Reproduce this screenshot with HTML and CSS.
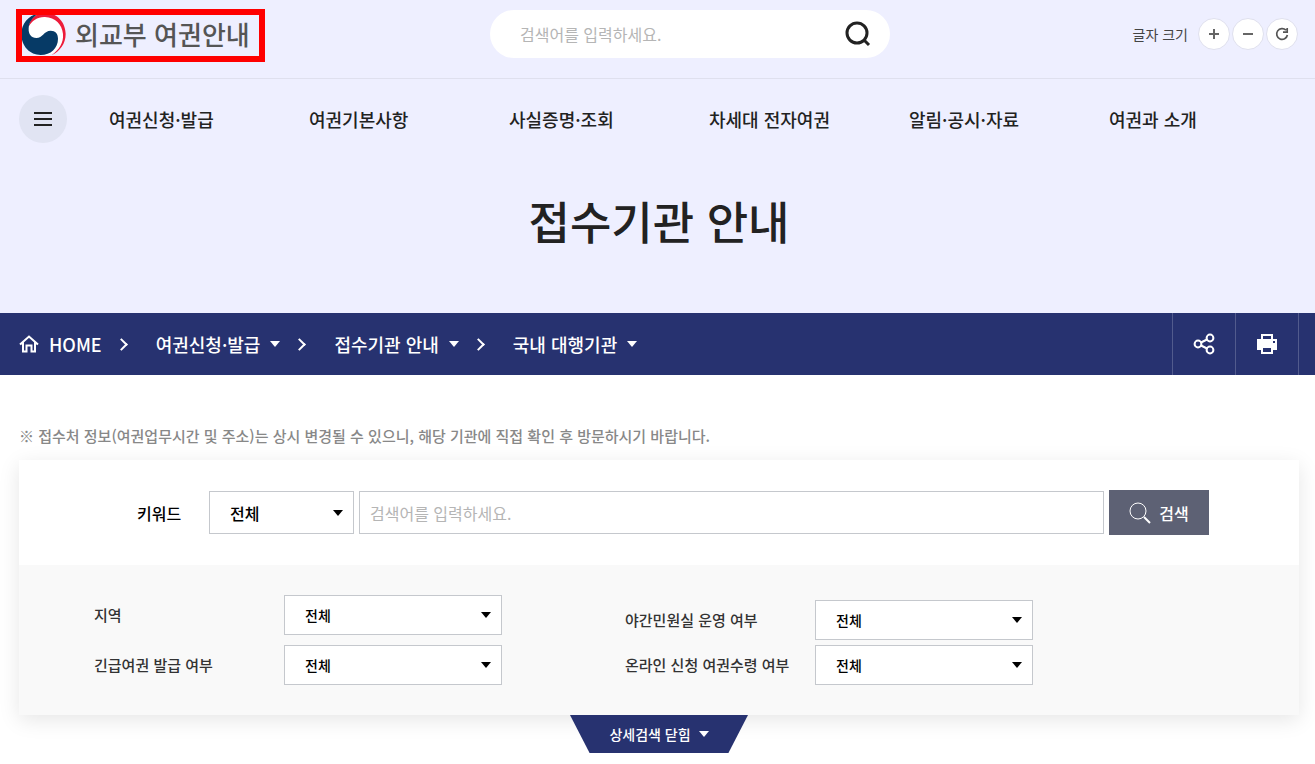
FILE: index.html
```
<!DOCTYPE html>
<html lang="ko">
<head>
  <meta charset="UTF-8">
  <title>접수기관 안내 | 외교부 여권안내</title>
  <meta name="viewport" content="width=device-width, initial-scale=1.0">
  <link rel="stylesheet" href="styles.css">
</head>
<body>
  <header class="header">
    <div class="header-top">
      <a href="#" class="logo">
        <svg class="logo-mark" viewBox="0 0 144 144" aria-hidden="true">
          <circle cx="70" cy="71" r="65" fill="#fff"/>
          <path fill="#ed1b3a" d="M26 50C28 28 48 8 76 8C112 8 137 38 137 72C137 101 120 124 94 136C118 119 131 98 129 72C126 43 106 22 75 21C53 20 36 32 26 50Z"/>
          <path fill="#063a66" d="M56 10C24 17 4 42 4 73C4 109 30 135 62 135C92 135 114 114 114 86C114 70 106 62 92 62C72 62 68 84 49 84C34 84 25 73 26 55C27 36 38 22 56 10Z"/>
        </svg>
        <span>외교부 여권안내</span>
      </a>

      <form class="top-search">
        <input type="text" placeholder="검색어를 입력하세요." aria-label="통합검색">
        <button type="button" aria-label="검색">
          <svg width="28" height="28" viewBox="0 0 28 28" fill="none" stroke="#222" stroke-width="3">
            <circle cx="13" cy="13" r="10"/>
            <path d="M20 20L25 25"/>
          </svg>
        </button>
      </form>

      <div class="font-size">
        <span>글자 크기</span>
        <button type="button" aria-label="크게">
          <svg width="12" height="12" viewBox="0 0 12 12" fill="none" stroke="#666" stroke-width="2"><path d="M1 6H11M6 1V11"/></svg>
        </button>
        <button type="button" aria-label="작게">
          <svg width="12" height="12" viewBox="0 0 12 12" fill="none" stroke="#666" stroke-width="2"><path d="M1 6H11"/></svg>
        </button>
        <button type="button" aria-label="초기화">
          <svg width="14" height="14" viewBox="0 0 14 14" fill="none" stroke="#555" stroke-width="1.700"><path d="M11 3.200A5.400 5.400 0 1 0 12.400 8M12.200 1V5.200H8"/></svg>
        </button>
      </div>
    </div>

    <nav class="gnb">
      <button type="button" class="menu-btn" aria-label="전체메뉴"><i></i><i></i><i></i></button>
      <ul>
        <li><a href="#">여권신청·발급</a></li>
        <li><a href="#">여권기본사항</a></li>
        <li><a href="#">사실증명·조회</a></li>
        <li><a href="#">차세대 전자여권</a></li>
        <li><a href="#">알림·공시·자료</a></li>
        <li><a href="#">여권과 소개</a></li>
      </ul>
    </nav>

    <h1>접수기관 안내</h1>
  </header>

  <div class="location">
    <ol>
      <li>
        <a href="#" class="home">
          <svg width="20" height="20" viewBox="0 0 20 20" fill="none" stroke="#fff" stroke-width="2"><path d="M1 10.500L10 2.500L19 10.500M4 8.500V17.500H7.500V11.500H12.500V17.500H16V8.500"/></svg>
          HOME
        </a>
      </li>
      <li><a href="#" class="drop">여권신청·발급</a></li>
      <li><a href="#" class="drop">접수기관 안내</a></li>
      <li><a href="#" class="drop">국내 대행기관</a></li>
    </ol>
    <div class="location-btns">
      <button type="button" aria-label="공유">
        <svg width="22" height="22" viewBox="0 0 22 22" fill="none" stroke="#fff" stroke-width="2">
          <circle cx="5" cy="11" r="3.400"/><circle cx="17" cy="5" r="3.400"/><circle cx="17" cy="17" r="3.400"/>
          <path d="M8 9.500L14 6.500M8 12.500L14 15.500"/>
        </svg>
      </button>
      <button type="button" aria-label="인쇄">
        <svg width="22" height="22" viewBox="0 0 22 22">
          <path fill="#fff" fill-rule="evenodd" d="M5 1H17V6H21V17H17V21H5V17H1V6H5ZM7 3V6H15V3ZM7 15V19H15V15ZM17 8V10H19V8Z"/>
        </svg>
      </button>
    </div>
  </div>

  <main class="content">
    <p class="notice">※ 접수처 정보(여권업무시간 및 주소)는 상시 변경될 수 있으니, 해당 기관에 직접 확인 후 방문하시기 바랍니다.</p>

    <form class="search-box">
      <div class="keyword">
        <label for="keyType">키워드</label>
        <span class="select key-type">
          <select id="keyType"><option>전체</option></select>
        </span>
        <input type="text" placeholder="검색어를 입력하세요." aria-label="검색어">
        <button type="button" class="search-btn">
          <svg width="22" height="22" viewBox="0 0 22 22" fill="none" stroke="#fff">
            <circle cx="9" cy="9" r="8"/>
            <path stroke-width="2" d="M15 15L21 21"/>
          </svg>
          검색
        </button>
      </div>

      <div class="detail">
        <div class="detail-col">
          <div class="field">
            <label for="area">지역</label>
            <span class="select"><select id="area"><option>전체</option></select></span>
          </div>
          <div class="field">
            <label for="urgent">긴급여권 발급 여부</label>
            <span class="select"><select id="urgent"><option>전체</option></select></span>
          </div>
        </div>
        <div class="detail-col narrow">
          <div class="field">
            <label for="night">야간민원실 운영 여부</label>
            <span class="select"><select id="night"><option>전체</option></select></span>
          </div>
          <div class="field">
            <label for="online">온라인 신청 여권수령 여부</label>
            <span class="select"><select id="online"><option>전체</option></select></span>
          </div>
        </div>
      </div>
    </form>

    <button type="button" class="detail-toggle">상세검색 닫힘</button>
  </main>
</body>
</html>
```
FILE: styles.css
```
* {
  margin: 0;
  padding: 0;
  box-sizing: border-box;
}

:root {
  --navy: #273270;
  --header-bg: #eeefff;
  --line: #dfe0ee;
  --text: #222;
}

body {
  font-family: "Noto Sans CJK KR", "Noto Sans", sans-serif;
  font-size: 16px;
  font-weight: 500;
  line-height: 24px;
  color: var(--text);
  background: #fff;
}

a {
  color: inherit;
  text-decoration: none;
}

ul,
ol {
  list-style: none;
}

button,
input,
select {
  font: inherit;
  color: inherit;
}

button {
  border: 0;
  cursor: pointer;
}

/* Header */
.header {
  padding-bottom: 58px;
  background: var(--header-bg);
}

.header-top {
  display: flex;
  align-items: center;
  padding: 10px 17px 20px 16px;
  border-bottom: 1px solid var(--line);
}

.logo {
  position: relative;
  display: flex;
  align-items: center;
  gap: 7px;
  width: 249px;
  height: 48px;
  padding-left: 4px;
  font-size: 26px;
  color: #555;
  white-space: nowrap;
}

.logo::after {
  content: '';
  position: absolute;
  inset: -1px 0 -4px;
  border: 6px solid #f00;
}

.logo-mark {
  width: 48px;
  height: 48px;
}

.top-search {
  display: flex;
  align-items: center;
  justify-content: space-between;
  width: 400px;
  height: 48px;
  margin-left: 225px;
  padding: 0 18px 0 30px;
  background: #fff;
  border-radius: 24px;
}

.top-search input {
  width: 280px;
  border: 0;
  outline: 0;
  font-weight: 400;
}

.top-search button {
  display: flex;
  background: none;
}

::placeholder {
  color: #b5b5b5;
  opacity: 1;
}

.font-size {
  display: flex;
  align-items: center;
  gap: 2px;
  margin-left: auto;
  font-size: 14px;
  font-weight: 400;
  color: #444;
}

.font-size span {
  margin-right: 8px;
}

.font-size button {
  display: flex;
  align-items: center;
  justify-content: center;
  width: 32px;
  height: 32px;
  background: #fff;
  border: 1px solid var(--line);
  border-radius: 50%;
}

.gnb {
  display: flex;
  align-items: center;
  padding: 16px 0 0 19px;
}

.menu-btn {
  display: flex;
  flex: none;
  flex-direction: column;
  align-items: center;
  justify-content: center;
  gap: 4px;
  width: 48px;
  height: 48px;
  background: #e1e4f3;
  border-radius: 50%;
}

.menu-btn i {
  width: 18px;
  height: 2px;
  background: var(--text);
}

.gnb ul {
  display: flex;
  margin-left: 42px;
  font-size: 18px;
}

.gnb li {
  width: 200px;
}

.header h1 {
  padding: 44px 16px 0 19px;
  font-size: 45px;
  font-weight: 500;
  line-height: 68px;
  text-align: center;
}

/* Breadcrumb */
.location {
  display: flex;
  justify-content: space-between;
  height: 62px;
  padding: 0 16px 0 19px;
  font-size: 18px;
  color: #fff;
  background: var(--navy);
}

.location ol,
.location li,
.location a {
  display: flex;
  align-items: center;
}

.location .home {
  gap: 10px;
}

.location li + li::before {
  content: '';
  width: 7px;
  height: 7px;
  margin: 0 30px 0 15px;
  border: solid #fff;
  border-width: 2px 2px 0 0;
  transform: rotate(45deg);
}

.drop::after,
.select::after,
.detail-toggle::after {
  content: '';
  border: solid transparent;
  border-width: 6px 5px 0;
  border-top-color: currentColor;
}

.drop::after {
  margin-left: 10px;
}

.location-btns {
  display: flex;
  border-right: 1px solid #525b8d;
}

.location-btns button {
  display: flex;
  align-items: center;
  justify-content: center;
  width: 63px;
  background: none;
  border-left: 1px solid #525b8d;
}

/* Content */
.content {
  padding: 49px 16px 0 19px;
}

.notice {
  margin-bottom: 12px;
  font-size: 15px;
  color: #888;
}

.search-box {
  box-shadow: 0 5px 20px rgba(0, 0, 0, 0.1);
}

.keyword {
  display: flex;
  align-items: center;
  gap: 5px;
  padding: 30px 90px 30px 118px;
  color: #000;
  background: #fff;
}

.keyword label {
  width: 67px;
}

.select {
  position: relative;
  display: block;
  width: 218px;
  height: 40px;
  font-size: 14px;
  color: #000;
}

.select select {
  width: 100%;
  height: 100%;
  padding-left: 20px;
  border: 1px solid #c5c8cd;
  border-radius: 0;
  background: #fff;
  appearance: none;
}

.select::after {
  position: absolute;
  top: 50%;
  right: 11px;
  margin-top: -3px;
  pointer-events: none;
}

.key-type {
  width: 145px;
  height: 43px;
  font-size: 16px;
}

.keyword input {
  flex: 1;
  min-width: 0;
  height: 43px;
  padding: 0 10px;
  border: 1px solid #c5c8cd;
  font-weight: 400;
}

.search-btn {
  display: flex;
  align-items: center;
  justify-content: center;
  gap: 8px;
  width: 100px;
  height: 45px;
  color: #fff;
  background: #5d6174;
}

.detail {
  display: flex;
  align-items: flex-end;
  gap: 123px;
  padding: 30px 75px;
  color: #333;
  background: #f9f9f9;
}

.detail-col {
  display: grid;
  gap: 10px;
}

.detail-col.narrow {
  gap: 5px;
}

.field {
  display: flex;
  align-items: center;
}

.field label {
  width: 190px;
  font-size: 15px;
}

.detail-toggle {
  display: flex;
  align-items: center;
  justify-content: center;
  gap: 8px;
  position: relative;
  width: 178px;
  height: 38px;
  margin: 0 auto;
  font-size: 14px;
  color: #fff;
  background: var(--navy);
  clip-path: polygon(0 0, 100% 0, 89% 100%, 11% 100%);
}
```
